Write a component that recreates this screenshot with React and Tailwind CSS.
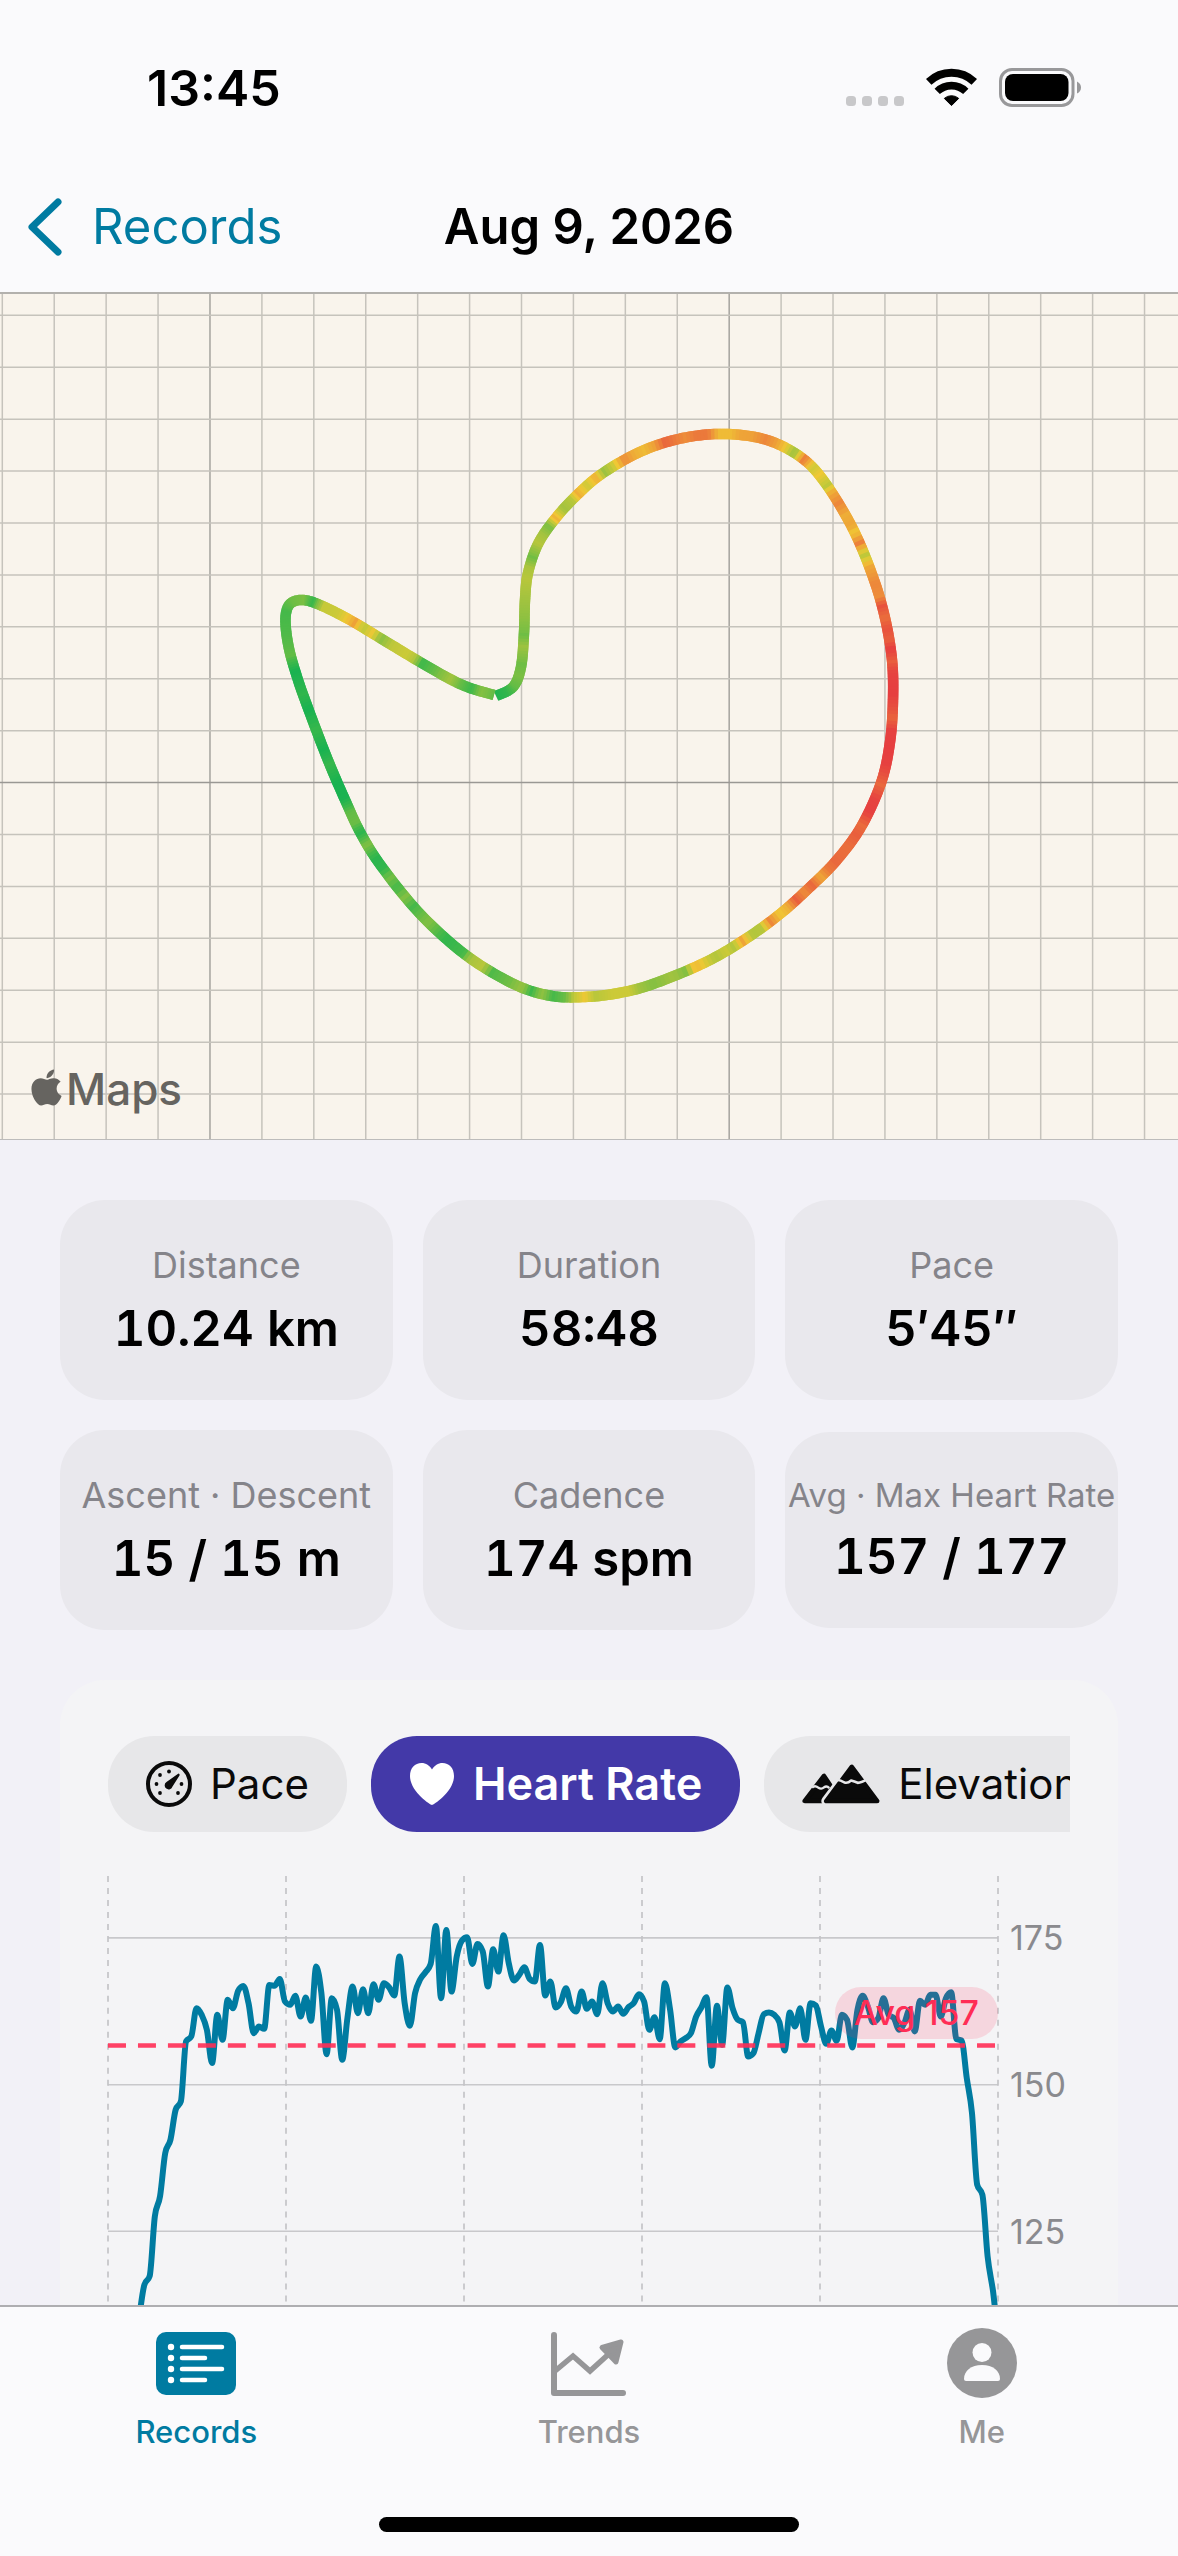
import { FaApple } from 'react-icons/fa';

// shape of the run
const TRACK = [
  [496, 696], [513, 687], [521, 667], [524, 633], [525, 600], [528, 573], [538, 544], [555, 519], [577, 495],
  [603, 473], [642, 451], [683, 438], [725, 434], [767, 440], [802, 458], [826, 484], [853, 529], [873, 577],
  [885, 618], [892, 660], [893, 700], [890, 742], [881, 783], [861, 827], [836, 861], [809, 888], [780, 914],
  [744, 940], [704, 963], [653, 984], [619, 993], [585, 997], [552, 996], [518, 986], [477, 963], [444, 937],
  [412, 905], [379, 863], [360, 832], [346, 802], [332, 770], [320, 740], [305, 700], [298, 680], [290, 653],
  [286, 630], [286, 613], [291, 603], [303, 600], [320, 605], [350, 620], [390, 644], [420, 662], [450, 679],
  [470, 688], [494, 695],
];

// effort along the track: x, y, effort (0 = easy, 100 = hard)
const EFFORT = [
  [497, 695, 4], [505, 692, 8], [513, 687, 20], [519, 677, 25], [522, 665, 22], [523, 648, 36], [524, 637, 22],
  [525, 618, 32], [526, 600, 38], [527, 580, 44], [529, 568, 40], [532, 559, 22], [538, 545, 44], [544, 536, 38],
  [549, 528, 25], [555, 520, 66], [563, 510, 38], [571, 501, 44], [577, 495, 66], [586, 486, 50], [595, 479, 66],
  [603, 473, 36], [612, 466, 52], [622, 460, 76], [632, 454, 66], [642, 450, 62], [652, 446, 70], [663, 443, 88],
  [683, 438, 76], [694, 436, 82], [706, 435, 82], [717, 434, 62], [729, 434, 62], [738, 435, 69], [750, 436, 70],
  [764, 439, 78], [775, 442, 70], [784, 446, 58], [793, 452, 36], [802, 459, 82], [811, 467, 50], [818, 474, 58],
  [826, 484, 46], [831, 491, 68], [838, 501, 78], [845, 513, 66], [851, 523, 69], [854, 530, 58], [859, 541, 80],
  [864, 552, 44], [869, 564, 68], [875, 582, 78], [879, 595, 76], [882, 604, 94], [885, 616, 85], [887, 627, 94],
  [889, 638, 90], [890, 647, 100], [892, 660, 90], [893, 671, 99], [893, 693, 100], [893, 706, 95], [893, 716, 88],
  [892, 728, 99], [890, 745, 100], [887, 763, 99], [884, 773, 94], [881, 783, 87], [876, 796, 98], [870, 811, 99],
  [863, 824, 86], [858, 833, 90], [848, 845, 85], [836, 861, 87], [828, 868, 82], [822, 876, 68], [813, 884, 88],
  [806, 892, 76], [798, 900, 90], [790, 907, 66], [781, 913, 58], [772, 921, 78], [764, 928, 44], [755, 935, 42],
  [744, 941, 70], [736, 946, 42], [728, 951, 50], [717, 956, 42], [707, 962, 54], [697, 966, 64], [688, 972, 28],
  [676, 977, 38], [655, 984, 28], [640, 988, 38], [630, 991, 50], [614, 994, 50], [597, 997, 44], [586, 998, 58],
  [575, 997, 46], [567, 997, 22], [554, 996, 14], [544, 992, 32], [533, 990, 12], [523, 987, 34], [512, 982, 23],
  [493, 974, 16], [484, 968, 44], [472, 961, 40], [464, 956, 14], [446, 942, 8], [429, 924, 27], [414, 908, 14],
  [405, 900, 27], [398, 890, 14], [390, 880, 24], [383, 871, 8], [376, 860, 6], [369, 845, 27], [361, 834, 6],
  [356, 824, 22], [350, 813, 20], [345, 800, 1], [337, 784, 0], [331, 765, 10], [325, 750, 0], [317, 732, 10],
  [309, 711, 0], [303, 695, 8], [296, 672, 0], [291, 657, 20], [287, 635, 16], [286, 612, 14], [291, 602, 22],
  [303, 600, 25], [312, 602, 10], [322, 606, 48], [337, 613, 50], [345, 618, 58], [353, 622, 70], [361, 627, 46],
  [371, 633, 58], [379, 638, 30], [390, 645, 46], [405, 653, 50], [412, 658, 44], [420, 663, 12], [435, 671, 22],
  [449, 679, 38], [458, 684, 22], [470, 689, 12], [480, 692, 28], [493, 695, 20],
];

const EFFORT_STOPS = [
  [0, 24, 178, 81],
  [14, 69, 185, 74],
  [25, 123, 191, 67],
  [38, 163, 195, 63],
  [50, 204, 202, 56],
  [58, 240, 200, 53],
  [66, 238, 174, 55],
  [77, 237, 138, 58],
  [88, 233, 101, 61],
  [100, 230, 62, 64],
];

function effortColor(v) {
  let i = 1;
  while (i < EFFORT_STOPS.length - 1 && v > EFFORT_STOPS[i][0]) i++;
  const a = EFFORT_STOPS[i - 1];
  const b = EFFORT_STOPS[i];
  const t = Math.min(1, Math.max(0, (v - a[0]) / (b[0] - a[0])));
  return `rgb(${[1, 2, 3].map((k) => Math.round(a[k] + (b[k] - a[k]) * t)).join(',')})`;
}

// effort at the closest place on the sampled line
function effortAt(x, y) {
  let best = Infinity;
  let effort = 0;
  for (let i = 0; i < EFFORT.length - 1; i++) {
    const [ax, ay, av] = EFFORT[i];
    const [bx, by, bv] = EFFORT[i + 1];
    const dx = bx - ax;
    const dy = by - ay;
    const t = Math.min(1, Math.max(0, ((x - ax) * dx + (y - ay) * dy) / (dx * dx + dy * dy)));
    const dist = Math.hypot(ax + dx * t - x, ay + dy * t - y);
    if (dist < best) {
      best = dist;
      effort = av + (bv - av) * t;
    }
  }
  return effort;
}

// Catmull-Rom through the track, cut in short pieces so each can have its own colour
function routePieces() {
  const steps = 12;
  const pts = [];
  for (let i = 0; i < TRACK.length - 1; i++) {
    const p0 = TRACK[Math.max(0, i - 1)];
    const p1 = TRACK[i];
    const p2 = TRACK[i + 1];
    const p3 = TRACK[Math.min(TRACK.length - 1, i + 2)];
    for (let s = 0; s < steps; s++) {
      const t = s / steps;
      const at = (k) =>
        0.5 * (2 * p1[k] + (p2[k] - p0[k]) * t + (2 * p0[k] - 5 * p1[k] + 4 * p2[k] - p3[k]) * t * t +
          (3 * p1[k] - p0[k] - 3 * p2[k] + p3[k]) * t * t * t);
      pts.push([at(0), at(1)]);
    }
  }
  pts.push(TRACK[TRACK.length - 1]);
  return pts.slice(0, -1).map((p, i) => {
    const m = pts[i + 1];
    const q = pts[Math.min(i + 2, pts.length - 1)];
    return { d: `M${p[0]} ${p[1]}L${m[0]} ${m[1]}L${q[0]} ${q[1]}`, color: effortColor(effortAt(p[0], p[1])) };
  });
}

// heart rate trace, evenly spaced in time, in chart units (234 = 175 bpm, 675 = 150 bpm)
const TRACE = [
  2400, 2250, 2050, 1850, 1700, 1520, 1375, 1275, 1250, 1070, 1010, 880, 840, 750, 725, 545, 530, 445, 465, 510,
  610, 465, 540, 420, 445, 393, 378, 430, 520, 500, 507, 375, 378, 357, 425, 435, 408, 470, 413, 483,
  320, 400, 583, 415, 450, 600, 475, 380, 460, 388, 460, 373, 420, 370, 382, 407, 290, 430, 498, 400,
  358, 337, 312, 198, 415, 210, 395, 290, 242, 232, 312, 252, 275, 380, 268, 335, 226, 310, 362, 345,
  322, 357, 365, 255, 407, 365, 443, 427, 385, 440, 455, 395, 447, 425, 463, 370, 430, 455, 440, 462,
  442, 430, 403, 425, 510, 472, 538, 370, 450, 563, 545, 535, 520, 470, 443, 412, 618, 438, 555, 383,
  445, 480, 487, 590, 580, 520, 463, 458, 465, 487, 572, 458, 500, 445, 540, 430, 437, 500, 552, 512,
  543, 465, 480, 563, 450, 408, 440, 487, 475, 415, 465, 475, 510, 490, 450, 515, 423, 435, 405, 405,
  470, 415, 397, 538, 542, 655, 760, 975, 1005, 1190, 1290, 1400,
];

const PLOT_WIDTH = 2673;

function tracePath() {
  const dx = PLOT_WIDTH / (TRACE.length - 1);
  const slope = (i) => {
    if (i === 0 || i === TRACE.length - 1) return 0;
    const a = TRACE[i] - TRACE[i - 1];
    const b = TRACE[i + 1] - TRACE[i];
    return (Math.sign(a) + Math.sign(b)) * Math.min(Math.abs(a), Math.abs(b), Math.abs(a + b) / 4);
  };
  let d = `M0 ${TRACE[0]}`;
  for (let i = 1; i < TRACE.length; i++) {
    const x0 = (i - 1) * dx;
    const x1 = i * dx;
    d += `C${x0 + dx / 3} ${TRACE[i - 1] + slope(i - 1) / 3} ${x1 - dx / 3} ${TRACE[i] - slope(i) / 3} ${x1} ${TRACE[i]}`;
  }
  return d;
}

const STATS = [
  { label: 'Distance', value: '10.24 km' },
  { label: 'Duration', value: '58:48' },
  { label: 'Pace', value: '5′45″' },
  { label: 'Ascent · Descent', value: '15 / 15 m' },
  { label: 'Cadence', value: '174 spm' },
  { label: 'Avg · Max Heart Rate', value: '157 / 177', small: true },
];

function StatusBar() {
  return (
    <div className="flex h-[176px] items-center justify-between pr-24 pl-[147px]">
      <span className="text-[50px] leading-[60px] font-semibold">13:45</span>
      <div className="flex items-center">
        <svg className="h-10 w-[58px]" viewBox="0 0 58 40" fill="#c8c8ca">
          {[0, 16, 32, 48].map((x) => (
            <rect key={x} x={x} y="28" width="10" height="10" rx="3.5" />
          ))}
        </svg>
        <svg className="ml-[22px] h-10 w-[51px]" viewBox="0 -1 51 40" fill="none" stroke="#000">
          <path d="M2.7 12.9A33 33 0 0 1 48.3 12.9" strokeWidth="8" />
          <path d="M11.2 22.4A20.5 20.5 0 0 1 39.8 22.4" strokeWidth="7.6" />
          <path d="M18.3 29.4A11 11 0 0 1 32.7 29.4L25.5 36.6Z" fill="#000" strokeWidth="1" strokeLinejoin="round" />
        </svg>
        <svg className="ml-[22px] h-10 w-[83px]" viewBox="0 0 83 40">
          <rect x="1.5" y="1.5" width="72.5" height="36" rx="11.5" fill="none" stroke="#98989a" strokeWidth="3" />
          <rect x="6" y="6" width="63.5" height="27" rx="8" />
          <path d="M78 13.5Q82 15.5 82 19.5T78 25.5Z" fill="#98989a" />
        </svg>
      </div>
    </div>
  );
}

function NavBar() {
  return (
    <div className="grid h-[102px] grid-cols-3 items-center text-[49px] leading-[60px]">
      <a href="#records" className="flex items-center gap-[30px] pl-7 text-[#007ba1]">
        <svg className="h-[60px] w-[34px]" viewBox="0 0 34 60" fill="none" stroke="currentColor" strokeWidth="7" strokeLinecap="round" strokeLinejoin="round">
          <path d="M30 5L4 30L30 55" />
        </svg>
        Records
      </a>
      <h1 className="text-center font-semibold whitespace-nowrap">Aug 9, 2026</h1>
    </div>
  );
}

function RouteMap() {
  const cols = Array.from({ length: 23 }, (_, i) => 2.3 + i * 51.92);
  const rows = Array.from({ length: 16 }, (_, i) => 315.3 + i * 51.92);
  return (
    <div className="relative h-[846px] border-b border-[#bdbcbb] bg-[#f9f4ec]">
      <svg className="h-full w-full" viewBox="0 294 1178 845" preserveAspectRatio="xMidYMid slice">
        <g stroke="#c6c3bc" strokeWidth="1.5">
          {cols.map((x, i) => (
            <path key={x} d={`M${x} 293V1140`} stroke={i === 4 || i === 14 ? '#a5a39e' : undefined} />
          ))}
          {rows.map((y, i) => (
            <path key={y} d={`M0 ${y}H1178`} stroke={i === 9 ? '#9a9894' : undefined} />
          ))}
        </g>
        <g fill="none" strokeWidth="10.5" strokeLinejoin="round">
          {routePieces().map((p) => (
            <path key={p.d} d={p.d} stroke={p.color} />
          ))}
        </g>
      </svg>
      <div className="absolute bottom-[22px] left-[31px] flex items-center gap-1 text-[#666460]">
        <FaApple className="mb-1 h-[41px] w-[31px]" />
        <span className="text-[44px] leading-[56px] font-medium">Maps</span>
      </div>
    </div>
  );
}

function Stat({ label, value, small }) {
  return (
    <div className="flex flex-col items-center gap-[10px] rounded-[45px] bg-[#e9e8ed] py-[41px] whitespace-nowrap">
      <span className={small ? 'text-[33px] leading-[44px] text-[#85848a]' : 'text-[36px] leading-[48px] text-[#85848a]'}>
        {label}
      </span>
      <span className="text-[49px] leading-[60px] font-semibold tabular-nums">{value}</span>
    </div>
  );
}

function GaugeIcon() {
  return (
    <svg className="h-[46px] w-[46px] shrink-0" viewBox="0 0 46 46" fill="currentColor">
      <circle cx="23" cy="23" r="21" fill="none" stroke="currentColor" strokeWidth="4" />
      {[[23, 10.5], [14, 14], [10.5, 23], [14, 32], [32, 32], [35.5, 23]].map(([x, y]) => (
        <circle key={`${x}-${y}`} cx={x} cy={y} r="1.9" />
      ))}
      <path d="M32.5 12.5Q34 13 33.5 14.5L26.5 25.5A4 4 0 1 1 20.5 21Z" />
    </svg>
  );
}

function HeartIcon() {
  return (
    <svg className="h-[46px] w-[46px] shrink-0" viewBox="0 0 46 46" fill="currentColor">
      <path d="M23 44C21.5 44 1 30.5 1 15C1 7 6 2 12.5 2C17 2 20.5 4.5 23 8.5C25.5 4.5 29 2 33.5 2C40 2 45 7 45 15C45 30.5 24.5 44 23 44Z" />
    </svg>
  );
}

function MountainIcon() {
  return (
    <svg className="h-10 w-[78px] shrink-0" viewBox="74 103 235 121" strokeLinejoin="round">
      <path d="M140 139L82 215H190Z" fill="currentColor" stroke="currentColor" strokeWidth="14" />
      <path d="M104 175Q112 166 122 174Q132 181 140 174T156 176" fill="none" stroke="#e7e7e9" strokeWidth="7" />
      <path d="M224 112L147 215H301Z" fill="#e7e7e9" stroke="#e7e7e9" strokeWidth="30" />
      <path d="M224 112L147 215H301Z" fill="currentColor" stroke="currentColor" strokeWidth="14" />
      <path d="M176 150Q192 152 202 159Q212 162 222 153Q232 156 242 160Q254 159 272 149" fill="none" stroke="#e7e7e9" strokeWidth="8" />
    </svg>
  );
}

const METRICS = [
  { name: 'Pace', Icon: GaugeIcon },
  { name: 'Heart Rate', Icon: HeartIcon, active: true },
  { name: 'Elevation', Icon: MountainIcon },
];

function MetricTabs() {
  return (
    <div className="flex gap-6 overflow-x-auto [scrollbar-width:none]">
      {METRICS.map(({ name, Icon, active }) => (
        <button
          key={name}
          type="button"
          aria-pressed={Boolean(active)}
          className={
            active
              ? 'flex h-24 shrink-0 items-center gap-[18px] rounded-[46px] bg-[#4339a8] px-[38px] text-[45px] leading-[54px] font-semibold text-white'
              : 'flex h-24 shrink-0 items-center gap-[18px] rounded-[46px] bg-[#e7e7e9] px-[38px] text-[42px] leading-[54px] text-[#0a0a0a]'
          }
        >
          <Icon />
          {name}
        </button>
      ))}
    </div>
  );
}

function HeartRateChart() {
  return (
    <div className="mt-8 flex">
      <div className="relative flex-1 pt-3">
        <svg className="block w-full overflow-visible" viewBox={`0 48 ${PLOT_WIDTH} 1500`} fill="none">
          {[234, 675, 1115].map((y) => (
            <path key={y} d={`M0 ${y}H${PLOT_WIDTH}`} stroke="#c8c8cb" strokeWidth="5" />
          ))}
          {[0, 1, 2, 3, 4, 5].map((i) => (
            <path key={i} d={`M${(i * PLOT_WIDTH) / 5} 48V1548`} stroke="#c3c3c6" strokeWidth="5" strokeDasharray="18 18" />
          ))}
          <path d={tracePath()} stroke="#007ba1" strokeWidth="18" strokeLinecap="round" strokeLinejoin="round" />
          <path d={`M0 557H${PLOT_WIDTH}`} stroke="#ff2d55" strokeOpacity="0.9" strokeWidth="13" strokeDasharray="54 36" />
        </svg>
        <span className="absolute top-[123px] right-0 rounded-[26px] bg-[#ff2d55]/15 px-[19px] text-[34px] leading-[52px] font-medium text-[#ff2d55]">
          Avg 157
        </span>
      </div>
      <div className="ml-3 w-[60px] text-[34px] leading-[147px] text-[#8a8a8e]">
        <div>175</div>
        <div>150</div>
        <div>125</div>
      </div>
    </div>
  );
}

function TabBar() {
  return (
    <nav className="border-t-2 border-[#aeaeb1] bg-[#fafafc] text-[31px] leading-9 font-medium text-[#969698]">
      <div className="grid grid-cols-3 pt-5">
        <a href="#records" className="flex flex-col items-center gap-[15px] text-[#007ba1]">
          <svg className="h-[72px] w-20" viewBox="0 -5 80 72" fill="none" stroke="#fff" strokeWidth="4.5" strokeLinecap="round">
            <rect width="80" height="63" rx="10" fill="#007ba1" stroke="none" />
            {[15, 26, 37, 48].map((y, i) => (
              <g key={y}>
                <circle cx="15" cy={y} r="3.2" fill="#fff" stroke="none" />
                <path d={i % 2 ? `M26 ${y}H49` : `M26 ${y}H66`} />
              </g>
            ))}
          </svg>
          Records
        </a>
        <a href="#trends" className="flex flex-col items-center gap-[15px]">
          <svg className="h-[72px] w-[76px]" viewBox="0 -5 76 72" fill="none" stroke="currentColor" strokeWidth="6" strokeLinecap="round" strokeLinejoin="round">
            <path d="M3 3V61H72" />
            <path d="M4 39L22 24L39 39L60 20" strokeWidth="5.5" strokeLinejoin="miter" />
            <path d="M51 15.5L70 10L65 30Z" fill="currentColor" strokeWidth="5" />
          </svg>
          Trends
        </a>
        <a href="#me" className="flex flex-col items-center gap-[15px]">
          <svg className="h-[72px] w-[72px]" viewBox="-1 -1 72 72" fill="#fafafc">
            <circle cx="35" cy="35" r="35" fill="#969698" />
            <circle cx="35" cy="24.5" r="9.5" />
            <path d="M17 51C17 43 24 37 35 37S53 43 53 51Q53 53 51 53H19Q17 53 17 51Z" />
          </svg>
          Me
        </a>
      </div>
      <div className="mx-auto mt-[67px] mb-6 h-[15px] w-[420px] rounded-full bg-black" />
    </nav>
  );
}

export default function App() {
  return (
    <div className="flex h-screen flex-col bg-[#f2f1f7] font-['Inter','Liberation_Sans',sans-serif] text-black">
      <header className="border-b-2 border-[#b3b1ad] bg-[#fafafc] pb-[14px]">
        <StatusBar />
        <NavBar />
      </header>
      <main className="min-h-0 flex-1 overflow-y-auto [scrollbar-width:none]">
        <RouteMap />
        <div className="px-[60px] pt-[60px]">
          <section className="grid grid-cols-3 items-center gap-[30px]">
            {STATS.map((s) => (
              <Stat key={s.label} {...s} />
            ))}
          </section>
          <section className="mt-[50px] rounded-[45px] bg-[#f4f4f6] px-12 pt-14 pb-12">
            <MetricTabs />
            <HeartRateChart />
          </section>
        </div>
      </main>
      <TabBar />
    </div>
  );
}
